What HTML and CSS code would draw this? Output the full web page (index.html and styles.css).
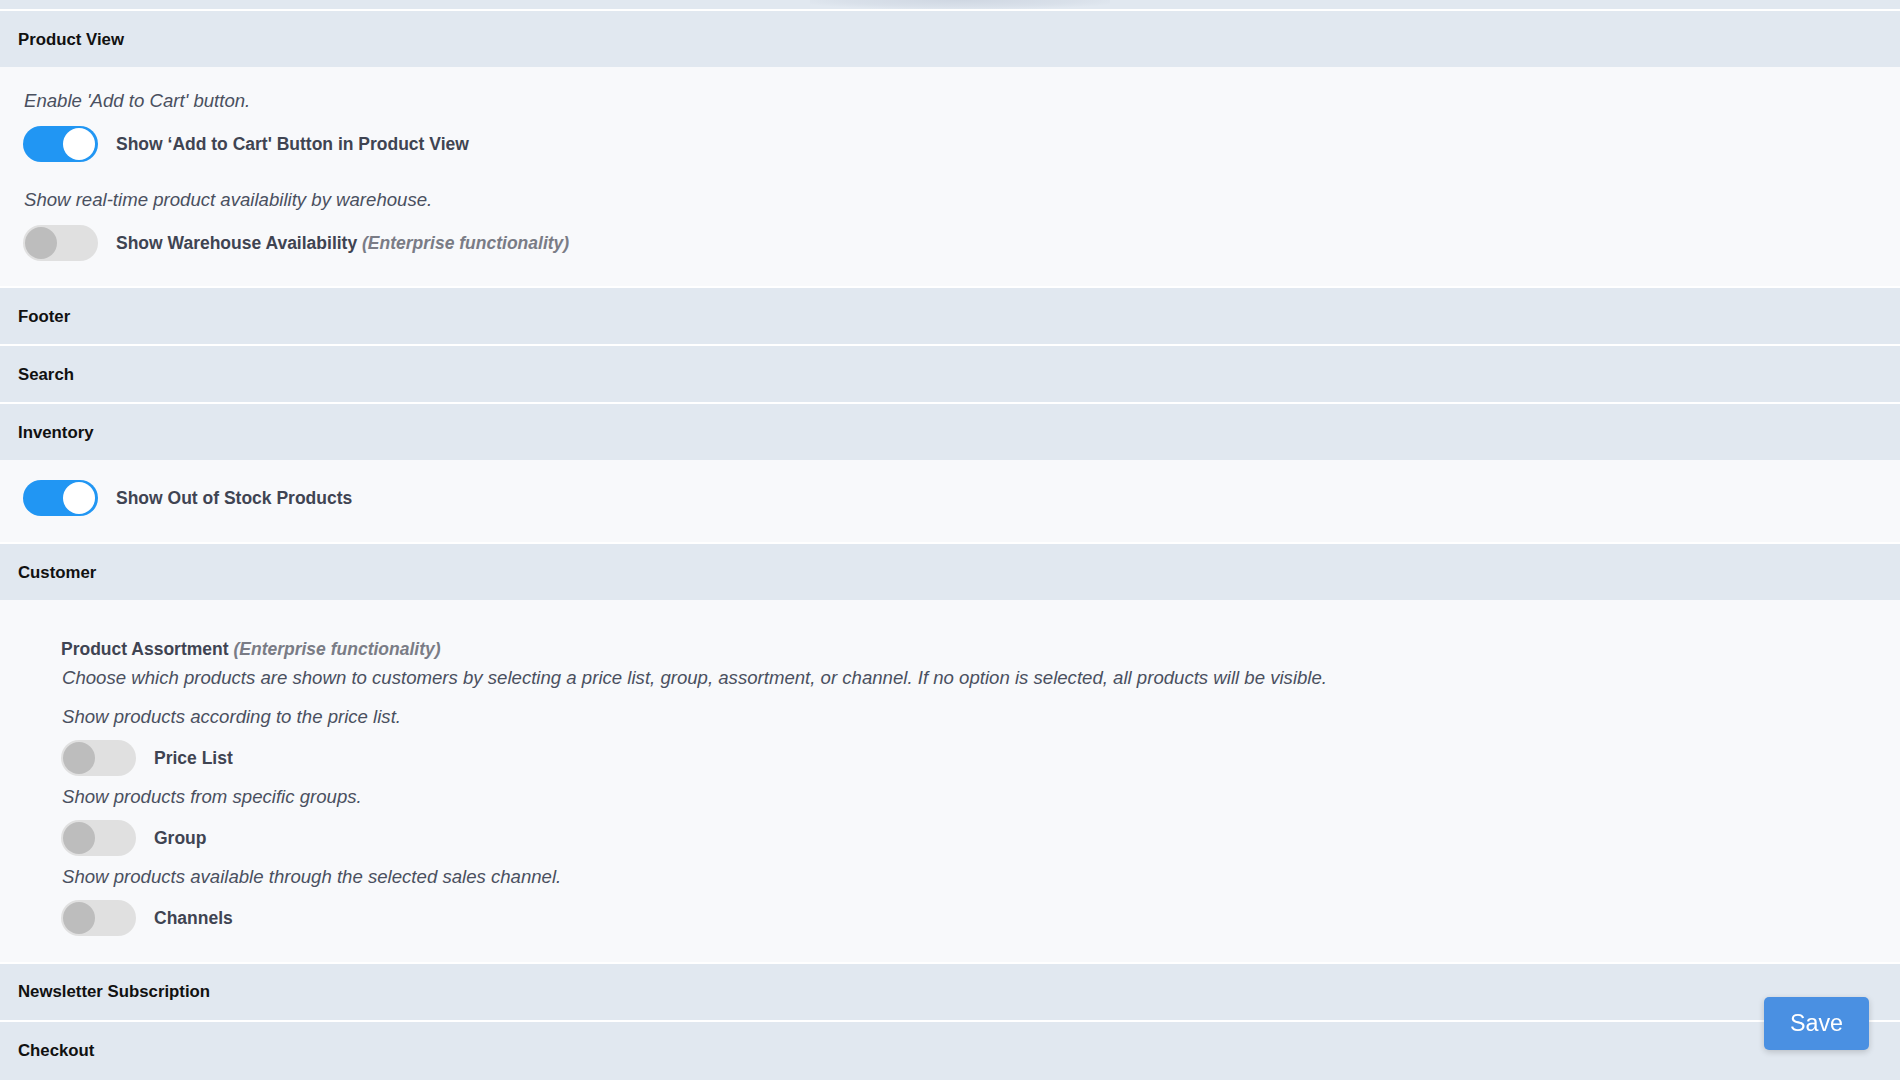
FILE: index.html
```html
<!DOCTYPE html>
<html lang="en">
<head>
<meta charset="utf-8">
<title>Settings</title>
<link rel="stylesheet" href="styles.css">
</head>
<body>
<div class="topbar"><div class="topbar-shade"></div></div>

<section class="section">
  <div class="section-header">Product View</div>
  <div class="panel panel-product">
    <div class="field">
      <p class="desc">Enable 'Add to Cart' button.</p>
      <div class="row">
        <span class="toggle on"><span class="knob"></span></span>
        <span class="label">Show ‘Add to Cart' Button in Product View</span>
      </div>
    </div>
    <div class="field">
      <p class="desc">Show real-time product availability by warehouse.</p>
      <div class="row">
        <span class="toggle"><span class="knob"></span></span>
        <span class="label">Show Warehouse Availability <em class="enterprise">(Enterprise functionality)</em></span>
      </div>
    </div>
  </div>
</section>

<section class="section">
  <div class="section-header">Footer</div>
</section>

<section class="section">
  <div class="section-header">Search</div>
</section>

<section class="section">
  <div class="section-header">Inventory</div>
  <div class="panel panel-inventory">
    <div class="row">
      <span class="toggle on"><span class="knob"></span></span>
      <span class="label">Show Out of Stock Products</span>
    </div>
  </div>
</section>

<section class="section">
  <div class="section-header">Customer</div>
  <div class="panel panel-customer">
    <div class="assortment">
      <div class="label">Product Assortment <em class="enterprise">(Enterprise functionality)</em></div>
      <p class="desc">Choose which products are shown to customers by selecting a price list, group, assortment, or channel. If no option is selected, all products will be visible.</p>
    </div>
    <div class="field">
      <p class="desc">Show products according to the price list.</p>
      <div class="row">
        <span class="toggle"><span class="knob"></span></span>
        <span class="label">Price List</span>
      </div>
    </div>
    <div class="field">
      <p class="desc">Show products from specific groups.</p>
      <div class="row">
        <span class="toggle"><span class="knob"></span></span>
        <span class="label">Group</span>
      </div>
    </div>
    <div class="field">
      <p class="desc">Show products available through the selected sales channel.</p>
      <div class="row">
        <span class="toggle"><span class="knob"></span></span>
        <span class="label">Channels</span>
      </div>
    </div>
  </div>
</section>

<section class="section">
  <div class="section-header">Newsletter Subscription</div>
</section>

<section class="section section-last">
  <div class="section-header">Checkout</div>
</section>

<button class="save-btn" type="button">Save</button>
</body>
</html>
```

FILE: styles.css
```css
html, body {
  margin: 0;
  padding: 0;
}

body {
  min-height: 100vh;
  display: flex;
  flex-direction: column;
  background: #f8f9fb;
  font-family: "Liberation Sans", Arial, sans-serif;
  color: #3f4452;
  overflow: hidden;
}

.topbar {
  flex: none;
  height: 9px;
  background: #e1e8f0;
  display: flex;
  justify-content: center;
}

.topbar-shade {
  width: 300px;
  height: 9px;
  margin-left: 20px;
  background: radial-gradient(ellipse at 50% 0%, rgba(160, 170, 190, 0.28) 0%, rgba(160, 170, 190, 0.12) 55%, rgba(160, 170, 190, 0) 80%);
}

.section {
  flex: none;
  display: flex;
  flex-direction: column;
}

.section-last {
  flex: 1 0 auto;
}

.section-header {
  border-top: 2px solid #ffffff;
  background: #e1e8f0;
  display: flex;
  align-items: center;
  padding: 1px 0 0 18px;
  box-sizing: content-box;
  height: 55px;
  font-size: 16.8px;
  font-weight: bold;
  color: #111111;
}

.section-last .section-header {
  flex: 1 0 auto;
}

.panel {
  background: #f8f9fb;
  display: flex;
  flex-direction: column;
}

.panel-product {
  padding: 23px 0 25px 23px;
  gap: 27px;
}

.panel-inventory {
  padding: 20px 0 26px 23px;
}

.panel-customer {
  padding: 37.5px 0 25.5px 61px;
  gap: 9.5px;
}

.field {
  display: flex;
  flex-direction: column;
}

.panel-product .field .desc {
  margin-bottom: 14px;
}

.panel-customer .field .desc {
  margin-bottom: 12.5px;
}

.desc {
  margin: 0;
  padding-left: 1px;
  font-size: 18.6px;
  line-height: 22px;
  font-style: italic;
  color: #4a505f;
}

.assortment {
  display: flex;
  flex-direction: column;
  gap: 7px;
  margin-bottom: 7.5px;
}

.assortment .label {
  line-height: 22px;
}

.row {
  display: flex;
  align-items: center;
  gap: 18px;
}

.label {
  font-size: 17.5px;
  font-weight: bold;
  color: #3f4452;
}

.enterprise {
  font-style: italic;
  color: #7a7c86;
}

.toggle {
  position: relative;
  flex: none;
  width: 75px;
  height: 36px;
  border-radius: 18px;
  background: #e0e0e0;
}

.toggle .knob {
  position: absolute;
  top: 2px;
  left: 2px;
  width: 32px;
  height: 32px;
  border-radius: 50%;
  background: #bdbdbd;
}

.toggle.on {
  background: #2196f3;
}

.toggle.on .knob {
  left: 40px;
  background: #ffffff;
}

.save-btn {
  position: fixed;
  right: 31px;
  bottom: 30px;
  width: 105px;
  height: 53px;
  border: none;
  border-radius: 5px;
  background: #4a90e2;
  color: #ffffff;
  font-family: "Liberation Sans", Arial, sans-serif;
  font-size: 23.3px;
  box-shadow: 0 2px 6px rgba(0, 0, 0, 0.18);
  cursor: pointer;
}
```
